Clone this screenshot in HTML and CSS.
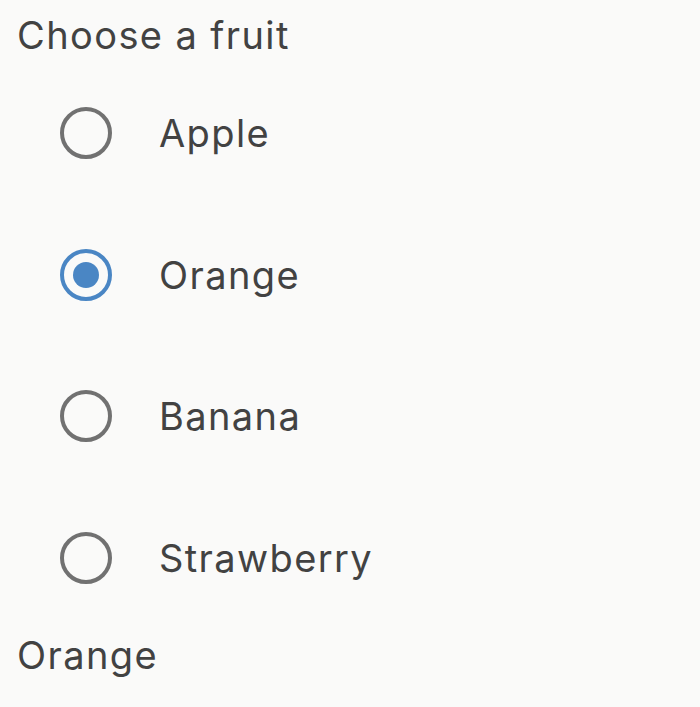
FILE: index.html
```html
<!DOCTYPE html>
<html>
<head>
<meta charset="utf-8">
<link rel="stylesheet" href="styles.css">
</head>
<body>
<div class="page">
  <div class="heading">Choose a fruit</div>
  <div class="group">
    <div class="row"><span class="radio"></span><span class="label">Apple</span></div>
    <div class="row"><span class="radio checked"></span><span class="label">Orange</span></div>
    <div class="row"><span class="radio"></span><span class="label">Banana</span></div>
    <div class="row"><span class="radio"></span><span class="label">Strawberry</span></div>
  </div>
  <div class="result">Orange</div>
</div>
</body>
</html>
```
FILE: styles.css
```css
html, body {
  margin: 0;
  padding: 0;
  background: #fafaf9;
}
.page {
  font-family: Inter, "Liberation Sans", sans-serif;
  font-size: 38px;
  letter-spacing: 1.4px;
  color: #424242;
  padding-left: 17px;
  padding-top: 12px;
}
.heading {
  line-height: 46px;
  height: 46px;
  margin-bottom: 4px;
}
.group {
  display: flex;
  flex-direction: column;
}
.row {
  height: 141.7px;
  display: flex;
  align-items: center;
  padding-left: 43px;
}
.radio {
  box-sizing: border-box;
  width: 52px;
  height: 52px;
  border: 4px solid #717171;
  border-radius: 50%;
  display: flex;
  align-items: center;
  justify-content: center;
  flex: none;
}
.radio.checked {
  border-color: #4a86c4;
}
.radio.checked::after {
  content: "";
  width: 26px;
  height: 26px;
  border-radius: 50%;
  background: #4a86c4;
}
.label {
  margin-left: 47px;
  line-height: 46px;
}
.result {
  line-height: 52px;
}
```
